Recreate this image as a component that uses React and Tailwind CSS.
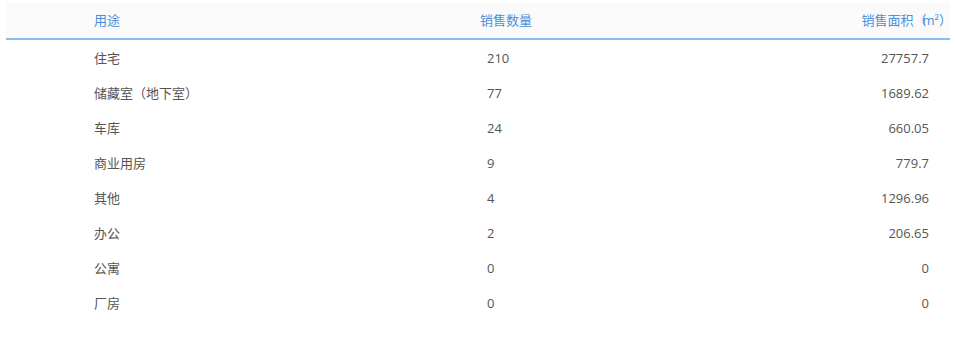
import React from "react";

const rows = [
  ["住宅", "210", "27757.7"],
  ["储藏室（地下室）", "77", "1689.62"],
  ["车库", "24", "660.05"],
  ["商业用房", "9", "779.7"],
  ["其他", "4", "1296.96"],
  ["办公", "2", "206.65"],
  ["公寓", "0", "0"],
  ["厂房", "0", "0"],
];

export default function App() {
  return (
    <div
      className="w-[956px] h-[357px] bg-white pt-[3px] pl-[6px]"
      style={{ fontFamily: '"Open Sans", "Noto Sans CJK SC", sans-serif' }}
    >
      <div className="w-[944px] text-[13px]">
        <div className="flex items-center h-[37px] bg-[#fafafa] border-b-2 border-[#8dbcec] text-[#4a8fdc]">
          <div className="w-[474px] pl-[88px]">用途</div>
          <div className="flex-1">销售数量</div>
          <div className="pr-[3px] text-right">
            销售面积<span className="tracking-[-4px]">（</span>m²<span className="tracking-[-5px]">）</span>
          </div>
        </div>
        {rows.map((r) => (
          <div key={r[0]} className="flex items-center h-[35px] text-[#555555] pt-[2px]">
            <div className="w-[474px] pl-[88px]">{r[0]}</div>
            <div className="flex-1 pl-[7px]">{r[1]}</div>
            <div className="pr-[21px] text-right">{r[2]}</div>
          </div>
        ))}
      </div>
    </div>
  );
}
